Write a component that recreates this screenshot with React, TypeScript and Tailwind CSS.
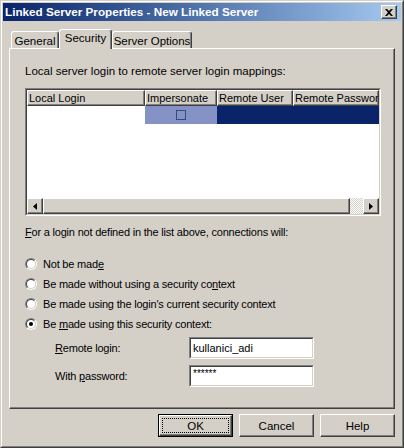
import React from "react";

function Radio({ checked }: { checked?: boolean }) {
  return (
    <div className="w-[12px] h-[12px] rounded-full border border-t-[#808080] border-l-[#808080] border-r-white border-b-white shrink-0">
      <div className="w-full h-full rounded-full border border-t-[#404040] border-l-[#404040] border-r-[#d4d0c8] border-b-[#d4d0c8] bg-white flex items-center justify-center">
        {checked && <div className="w-[4px] h-[4px] rounded-full bg-black" />}
      </div>
    </div>
  );
}

function RadioRow({ checked, children }: { checked?: boolean; children: React.ReactNode }) {
  return (
    <div className="h-[20px] flex items-center gap-[6px]">
      <Radio checked={checked} />
      <span className="whitespace-nowrap">{children}</span>
    </div>
  );
}

function Tab({ label, selected, w }: { label: string; selected?: boolean; w: string }) {
  return (
    <div
      className={
        "flex items-center justify-center rounded-t-[3px] border-t border-l border-r border-t-white border-l-white border-r-[#404040] shadow-[inset_-1px_0_0_#808080] bg-[#d4d0c8] " +
        w +
        (selected ? " h-[20px] -mb-px relative z-10 pb-[3px]" : " h-[17px] pt-[1px]")
      }
    >
      <span className="whitespace-nowrap">{label}</span>
    </div>
  );
}

function HeaderCell({ label, w }: { label: string; w: string }) {
  return (
    <div
      className={
        "h-full flex items-center pl-[1px] overflow-hidden whitespace-nowrap border-t border-l border-r border-b border-t-white border-l-white border-r-[#404040] border-b-[#404040] shadow-[inset_-1px_-1px_0_#808080] " +
        w
      }
    >
      {label}
    </div>
  );
}

function Arrow({ dir }: { dir: "left" | "right" }) {
  return (
    <div className="w-[16px] h-[16px] shrink-0 bg-[#d4d0c8] border border-t-white border-l-white border-r-[#404040] border-b-[#404040] shadow-[inset_-1px_-1px_0_#808080] flex items-center justify-center">
      <svg width="4" height="7" viewBox="0 0 4 7">
        {dir === "left" ? <path d="M4 0 L0 3.5 L4 7 Z" fill="#000" /> : <path d="M0 0 L4 3.5 L0 7 Z" fill="#000" />}
      </svg>
    </div>
  );
}

function Btn({ label, def }: { label: string; def?: boolean }) {
  if (def) {
    return (
      <div className="w-[75px] h-[23px] border border-black">
        <div className="w-full h-full border border-t-white border-l-white border-r-[#404040] border-b-[#404040] shadow-[inset_-1px_-1px_0_#808080] p-[2px]">
          <div className="w-full h-full border border-dotted border-black flex items-center justify-center">
            {label}
          </div>
        </div>
      </div>
    );
  }
  return (
    <div className="w-[75px] h-[23px] border border-t-white border-l-white border-r-[#404040] border-b-[#404040] shadow-[inset_-1px_-1px_0_#808080] flex items-center justify-center">
      {label}
    </div>
  );
}

export default function App() {
  return (
    <div className="w-[404px] h-[448px] bg-[#d4d0c8] font-['Liberation_Sans',Arial,sans-serif] text-[11.5px] leading-[14px] text-black border border-t-[#d4d0c8] border-l-[#d4d0c8] border-r-[#404040] border-b-[#404040] overflow-hidden">
      <div className="h-full border border-t-white border-l-white border-r-[#808080] border-b-[#808080] p-px flex flex-col">
        {/* Title bar */}
        <div className="h-[18px] shrink-0 flex items-center justify-between bg-gradient-to-r from-[#0a246a] to-[#a6caf0] pl-[2px] pr-[4px]">
          <span className="text-white font-bold text-[11.7px] whitespace-nowrap">
            Linked Server Properties - New Linked Server
          </span>
          <div className="w-[16px] h-[14px] bg-[#d4d0c8] border border-t-white border-l-white border-r-[#404040] border-b-[#404040] shadow-[inset_-1px_-1px_0_#808080] flex items-center justify-center">
            <svg width="8" height="7" viewBox="0 0 8 7">
              <path d="M0 0 L2 0 L4 2 L6 0 L8 0 L5 3.5 L8 7 L6 7 L4 5 L2 7 L0 7 L3 3.5 Z" fill="#000" />
            </svg>
          </div>
        </div>

        {/* Body */}
        <div className="flex-1 flex flex-col px-[6px] pt-[8px] pb-[8px]">
          {/* Tabs */}
          <div className="h-[19px] shrink-0 flex items-end pl-[2px]">
            <Tab label="General" w="w-[48px]" />
            <Tab label="Security" w="w-[53px]" selected />
            <Tab label="Server Options" w="w-[80px]" />
          </div>

          {/* Panel */}
          <div className="h-[361px] shrink-0 border border-t-white border-l-white border-r-[#404040] border-b-[#404040] shadow-[inset_-1px_-1px_0_#808080] pl-[15px] flex flex-col">
            <div className="mt-[15px] h-[14px] whitespace-nowrap">Local server login to remote server login mappings:</div>

            {/* Grid */}
            <div className="mt-[10px] w-[356px] h-[128px] border border-t-[#808080] border-l-[#808080] border-r-white border-b-white">
              <div className="w-full h-full border border-t-[#404040] border-l-[#404040] border-r-[#d4d0c8] border-b-[#d4d0c8] bg-white flex flex-col text-[11px]">
                <div className="h-[16px] flex bg-[#d4d0c8]">
                  <HeaderCell label="Local Login" w="w-[118px]" />
                  <HeaderCell label="Impersonate" w="w-[72px]" />
                  <HeaderCell label="Remote User" w="w-[76px]" />
                  <HeaderCell label="Remote Password" w="flex-1" />
                </div>
                <div className="h-[18px] flex">
                  <div className="w-[118px] bg-white" />
                  <div className="w-[72px] bg-[#8592c6] flex items-center justify-center">
                    <div className="w-[10px] h-[10px] border border-[#3a4a80]" />
                  </div>
                  <div className="flex-1 bg-[#0a246a]" />
                </div>
                <div className="flex-1 bg-white" />
                <div className="h-[16px] flex bg-[#d4d0c8]">
                  <Arrow dir="left" />
                  <div className="w-[307px] h-full border border-t-white border-l-white border-r-[#404040] border-b-[#404040] shadow-[inset_-1px_-1px_0_#808080]" />
                  <div className="flex-1 h-full bg-[repeating-conic-gradient(#ffffff_0_25%,#d4d0c8_0_50%)] bg-[length:2px_2px]" />
                  <Arrow dir="right" />
                </div>
              </div>
            </div>

            <div className="text-[11px] tracking-[-0.2px]">
              <div className="mt-[9px] h-[14px] whitespace-nowrap">
                <u className="underline">F</u>or a login not defined in the list above, connections will:
              </div>

              <div className="mt-[15px] flex flex-col">
                <RadioRow>
                  Not be mad<u className="underline">e</u>
                </RadioRow>
                <RadioRow>
                  Be made without using a security co<u className="underline">n</u>text
                </RadioRow>
                <RadioRow>Be made using the login's current security context</RadioRow>
                <RadioRow checked>
                  Be <u className="underline">m</u>ade using this security context:
                </RadioRow>
              </div>

              <div className="mt-[3px] flex items-center h-[22px]">
                <div className="w-[164px] pl-[30px] whitespace-nowrap">
                  <u className="underline">R</u>emote login:
                </div>
                <div className="w-[125px] h-[22px] border border-t-[#808080] border-l-[#808080] border-r-white border-b-white">
                  <div className="w-full h-full border border-t-[#404040] border-l-[#404040] border-r-[#d4d0c8] border-b-[#d4d0c8] bg-white flex items-center pl-[2px] tracking-normal">
                    kullanici_adi
                  </div>
                </div>
              </div>
              <div className="mt-[6px] flex items-center h-[22px]">
                <div className="w-[164px] pl-[30px] whitespace-nowrap">
                  With <u className="underline">p</u>assword:
                </div>
                <div className="w-[125px] h-[22px] border border-t-[#808080] border-l-[#808080] border-r-white border-b-white">
                  <div className="w-full h-full border border-t-[#404040] border-l-[#404040] border-r-[#d4d0c8] border-b-[#d4d0c8] bg-white flex items-start pl-[2px] pt-[2px] text-[10px] leading-[10px] tracking-normal">
                    ******
                  </div>
                </div>
              </div>
            </div>
          </div>

          {/* Buttons */}
          <div className="mt-[5px] flex justify-end gap-[6px]">
            <Btn label="OK" def />
            <Btn label="Cancel" />
            <Btn label="Help" />
          </div>
        </div>
      </div>
    </div>
  );
}
